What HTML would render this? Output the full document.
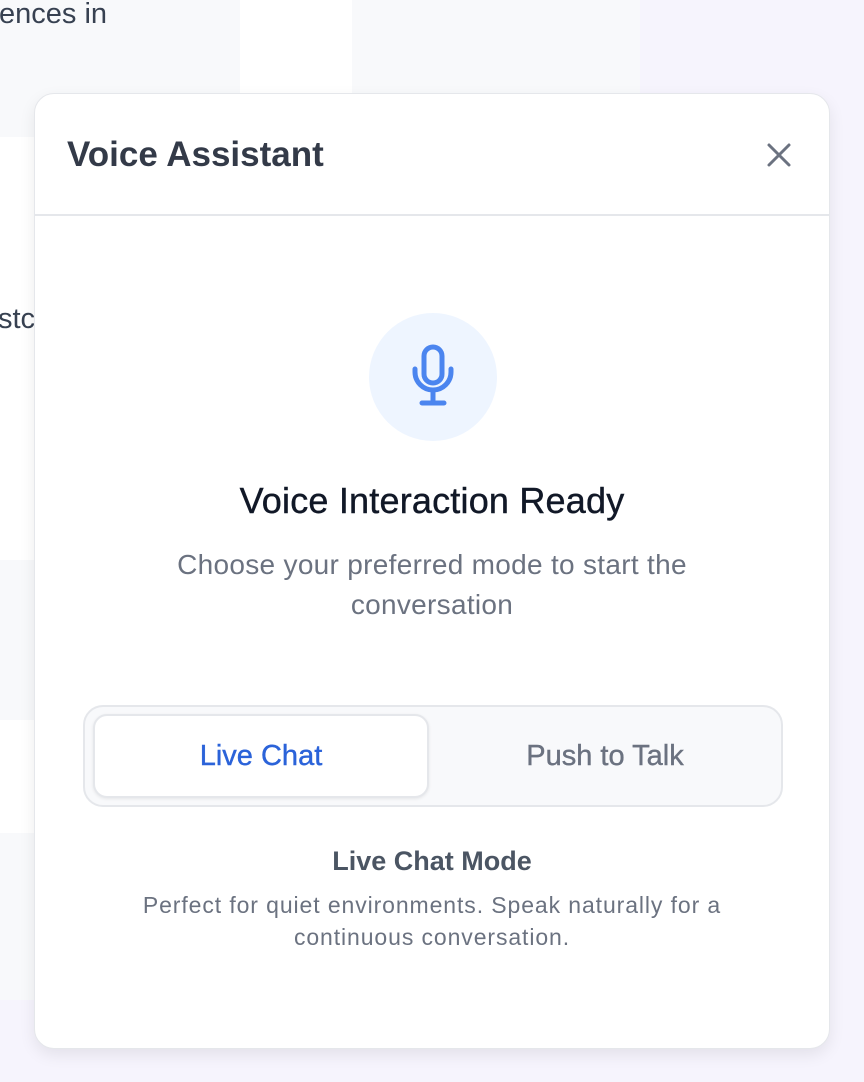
<!DOCTYPE html>
<html><head><style>
body{margin:0;width:864px;height:1082px;position:relative;overflow:hidden;background:#f6f4fd;font-family:"Liberation Sans",sans-serif;}
.bg{position:absolute}
.modal{position:absolute;left:34px;top:93px;width:796px;height:956px;background:#fff;border:1px solid #e5e7eb;border-radius:20px;box-shadow:0 6px 16px rgba(0,0,0,.08);box-sizing:border-box}
.c{position:absolute;left:0;width:100%;text-align:center;white-space:nowrap}
</style></head><body>
<div class="bg" style="left:0;top:0;width:240px;height:137px;background:#f8f9fb"></div>
<div class="bg" style="left:240px;top:0;width:112px;height:137px;background:#fff"></div>
<div class="bg" style="left:352px;top:0;width:288px;height:137px;background:#f8f9fb"></div>
<div class="bg" style="left:0;top:137px;width:40px;height:423px;background:#fff"></div>
<div class="bg" style="left:0;top:560px;width:40px;height:160px;background:#f8f9fb"></div>
<div class="bg" style="left:0;top:720px;width:40px;height:113px;background:#fff"></div>
<div class="bg" style="left:0;top:833px;width:40px;height:167px;background:#f8f9fb"></div>
<div class="bg" style="left:-1px;top:-6px;font-size:29px;line-height:40px;color:#374151">ences in</div>
<div class="bg" style="left:-2px;top:299px;font-size:29px;line-height:40px;color:#374151">stc</div>
<div class="modal">
 <div style="position:absolute;left:32px;top:40px;font-size:35px;line-height:42px;font-weight:bold;color:#333a48">Voice Assistant</div>
 <svg style="position:absolute;left:729px;top:46px" width="30" height="30" viewBox="0 0 30 30"><path d="M5 5L25 25M25 5L5 25" stroke="#6b7280" stroke-width="3" stroke-linecap="round"/></svg>
 <div style="position:absolute;left:0;top:120px;width:100%;height:2px;background:#e5e7eb"></div>
 <div style="position:absolute;left:334px;top:219px;width:128px;height:128px;border-radius:50%;background:#eef5ff"></div>
 <svg style="position:absolute;left:374px;top:250px" width="50" height="66" viewBox="0 0 50 66">
  <rect x="15" y="3" width="18" height="36" rx="9" fill="none" stroke="#4b85ef" stroke-width="5"/>
  <path d="M6 25v3a18 18 0 0 0 36 0v-3M24 46v12M13 59h22" fill="none" stroke="#4b85ef" stroke-width="5" stroke-linecap="round"/>
 </svg>
 <div class="c" style="top:385px;font-size:36px;line-height:44px;letter-spacing:0.2px;color:#111827;-webkit-text-stroke:0.4px #111827">Voice Interaction Ready</div>
 <div class="c" style="top:451px;font-size:28px;line-height:40px;letter-spacing:0.3px;color:#6b7280">Choose your preferred mode to start the<br>conversation</div>
 <div style="position:absolute;left:48px;top:611px;width:700px;height:102px;box-sizing:border-box;border:2px solid #e5e7eb;border-radius:20px;background:#f8f9fb"></div>
 <div style="position:absolute;left:58px;top:620px;width:336px;height:84px;box-sizing:border-box;border:2px solid #e5e7eb;border-radius:14px;background:#fff;box-shadow:0 1px 3px rgba(0,0,0,.08);text-align:center;line-height:80px;font-size:29px;color:#2b63d9;-webkit-text-stroke:0.4px #2b63d9">Live Chat</div>
 <div style="position:absolute;left:400px;top:620px;width:340px;height:84px;text-align:center;line-height:84px;font-size:29px;color:#6b7280;-webkit-text-stroke:0.4px #6b7280">Push to Talk</div>
 <div class="c" style="top:750px;font-size:27px;line-height:34px;font-weight:bold;color:#4b5563">Live Chat Mode</div>
 <div class="c" style="top:795px;font-size:23px;line-height:32px;letter-spacing:0.9px;color:#6b7280">Perfect for quiet environments. Speak naturally for a<br>continuous conversation.</div>
</div>
</body></html>
